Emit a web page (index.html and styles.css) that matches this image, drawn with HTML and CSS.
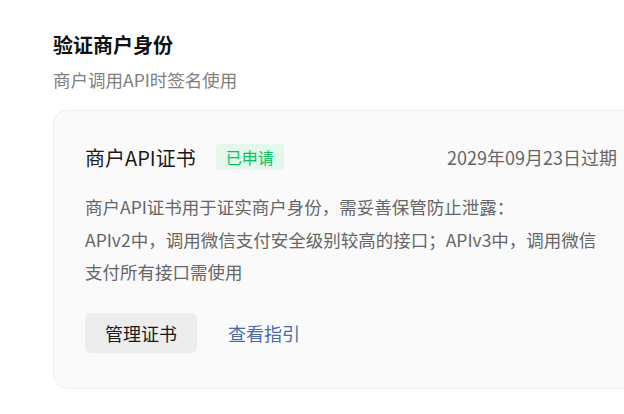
FILE: index.html
```html
<!DOCTYPE html>
<html lang="zh-CN">
<head>
<meta charset="utf-8">
<link rel="stylesheet" href="styles.css">
</head>
<body>
<div class="page">
  <h2 class="title">验证商户身份</h2>
  <p class="subtitle">商户调用API时签名使用</p>
  <div class="card">
    <div class="card-head">
      <div class="name-wrap">
        <span class="name">商户API证书</span>
        <span class="badge">已申请</span>
      </div>
      <span class="date">2029年09月23日过期</span>
    </div>
    <div class="desc">
      <p>商户API证书用于证实商户身份，需妥善保管防止泄露：</p>
      <p>APIv2中，调用微信支付安全级别较高的接口；APIv3中，调用微信支付所有接口需使用</p>
    </div>
    <div class="actions">
      <button class="btn">管理证书</button>
      <a class="link">查看指引</a>
    </div>
  </div>
</div>
</body>
</html>
```
FILE: styles.css
```css
* { box-sizing: border-box; }
html, body { margin: 0; padding: 0; background: #fff; overflow: hidden; }
body {
  font-family: "Noto Sans CJK SC", "Noto Sans", sans-serif;
  width: 624px;
  height: 414px;
}
.page {
  padding: 31px 0 0 53px;
  width: 700px;
}
.title {
  margin: 0;
  font-size: 20px;
  line-height: 28px;
  font-weight: 700;
  color: #111;
}
.subtitle {
  margin: 8px 0 0;
  font-size: 17.5px;
  line-height: 26px;
  color: #808080;
}
.card {
  margin-top: 17px;
  width: 596px;
  background: #fafafa;
  border: 1px solid #f0f0f0;
  border-radius: 14px;
  padding: 31px 31px 35px 31px;
}
.card-head {
  display: flex;
  justify-content: space-between;
  align-items: center;
  height: 30px;
}
.name-wrap {
  display: flex;
  align-items: center;
  gap: 20px;
}
.name {
  font-size: 20px;
  color: #1a1a1a;
}
.badge {
  display: inline-flex;
  align-items: center;
  height: 26px;
  padding: 0 10px;
  border-radius: 4px;
  background: #e4f7eb;
  color: #07c160;
  font-size: 16px;
}
.date {
  font-size: 18px;
  color: #666;
}
.desc {
  margin-top: 19px;
  width: 522px;
  font-size: 17.5px;
  line-height: 32.5px;
  color: #666;
}
.desc p { margin: 0; }
.actions {
  margin-top: 24px;
  display: flex;
  align-items: center;
  gap: 31px;
}
.btn {
  font-family: inherit;
  border: 0;
  height: 40px;
  padding: 0 20px;
  border-radius: 6px;
  background: #ededed;
  color: #1a1a1a;
  font-size: 18px;
}
.link {
  font-size: 18px;
  color: #4a6aae;
}
```
